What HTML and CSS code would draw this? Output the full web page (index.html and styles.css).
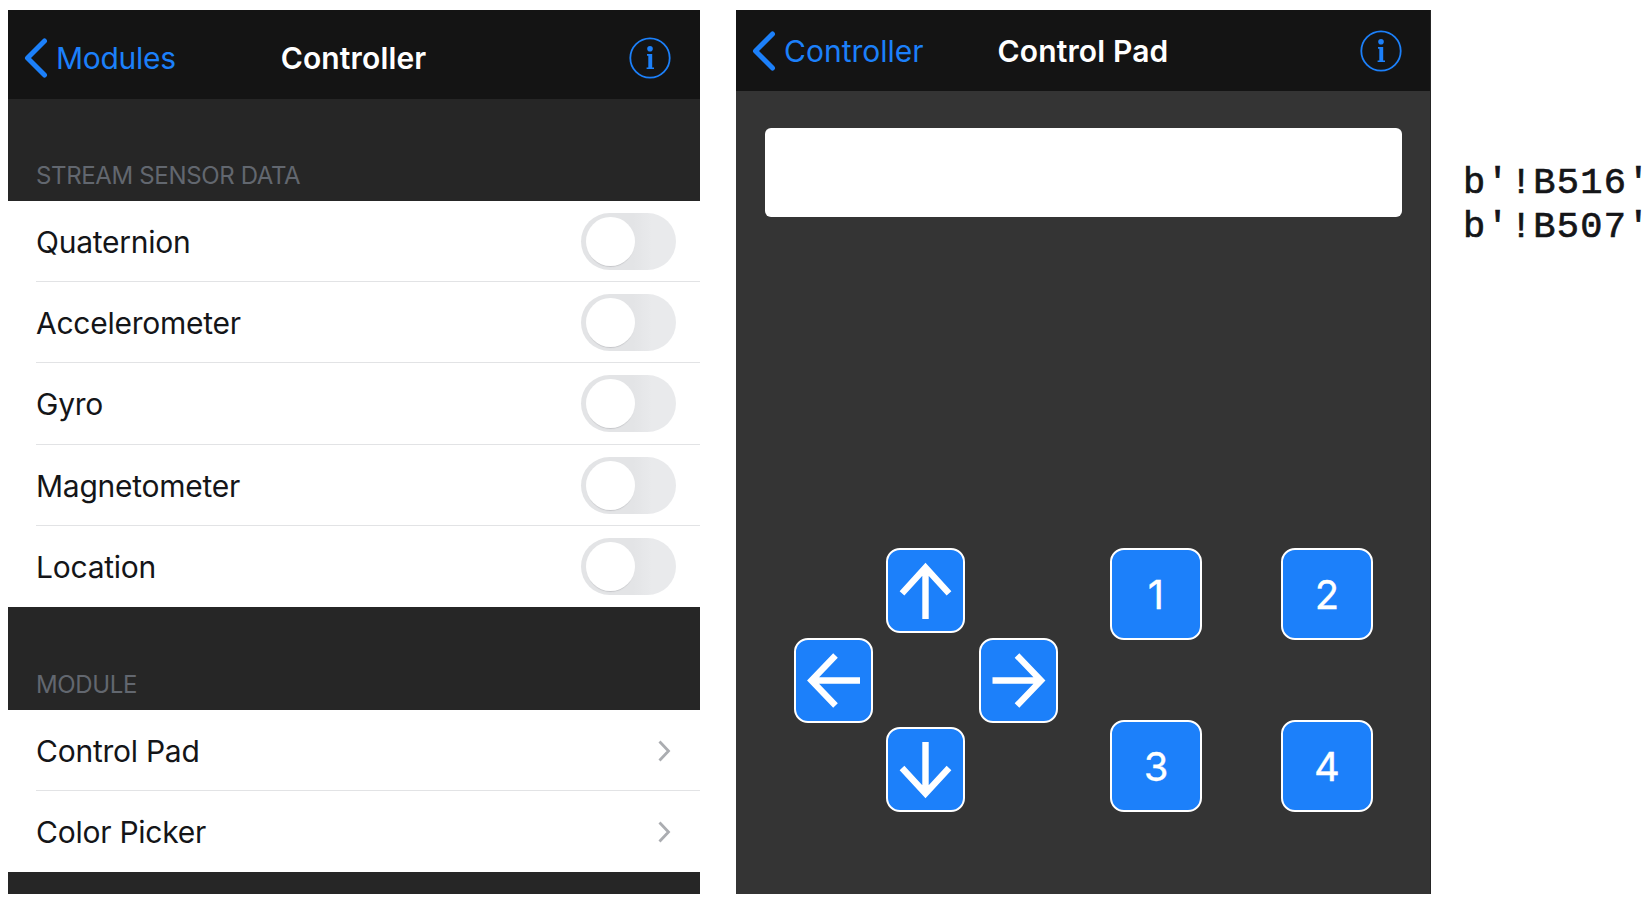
FILE: index.html
```
<!DOCTYPE html>
<html lang="en">
<head>
<meta charset="utf-8">
<title>Controller</title>
<link rel="stylesheet" href="styles.css">
</head>
<body>
<main class="stage">
  <section class="screen modules">
    <header class="navbar">
      <a class="back"><svg class="back-icon" viewBox="0 0 24 40"><path d="M20.5 3 3.5 20l17 17"/></svg><span>Modules</span></a>
      <h1>Controller</h1>
      <svg class="info" viewBox="0 0 42 42"><circle class="ring" cx="21" cy="21" r="19.7"/><circle cx="21" cy="11.7" r="2.8"/><path d="M18 17h5.2v13.5H25v1.6h-7.4v-1.6h1.7V18.7H18z"/></svg>
    </header>
    <h2 class="group-title first">STREAM SENSOR DATA</h2>
    <ul class="list sensors">
      <li><span>Quaternion</span><i class="toggle"></i></li>
      <li><span>Accelerometer</span><i class="toggle"></i></li>
      <li><span>Gyro</span><i class="toggle"></i></li>
      <li><span>Magnetometer</span><i class="toggle"></i></li>
      <li><span>Location</span><i class="toggle"></i></li>
    </ul>
    <h2 class="group-title second">MODULE</h2>
    <ul class="list links">
      <li><span>Control Pad</span><svg class="more" viewBox="0 0 14 24"><path d="M2.5 2.5 11.5 12l-9 9.5"/></svg></li>
      <li><span>Color Picker</span><svg class="more" viewBox="0 0 14 24"><path d="M2.5 2.5 11.5 12l-9 9.5"/></svg></li>
    </ul>
  </section>

  <section class="screen pad">
    <header class="navbar">
      <a class="back"><svg class="back-icon" viewBox="0 0 24 40"><path d="M20.5 3 3.5 20l17 17"/></svg><span>Controller</span></a>
      <h1>Control Pad</h1>
      <svg class="info" viewBox="0 0 42 42"><circle class="ring" cx="21" cy="21" r="19.7"/><circle cx="21" cy="11.7" r="2.8"/><path d="M18 17h5.2v13.5H25v1.6h-7.4v-1.6h1.7V18.7H18z"/></svg>
    </header>
    <div class="field"></div>
    <div class="keys">
      <div class="arrows">
        <button class="key up"><svg viewBox="0 0 79 85"><path d="M16 45.3 39.5 19.5 63 45.3M39.5 20v51"/></svg></button>
        <button class="key left"><svg viewBox="0 0 79 85"><path d="M41.5 17.5 17.5 42.5l24 25M18 42.5h48"/></svg></button>
        <button class="key right"><svg viewBox="0 0 79 85"><path d="M38 17.5l24 25-24 25M61.5 42.5h-48"/></svg></button>
        <button class="key down"><svg viewBox="0 0 79 85"><path d="M16 41 39.5 66.5 63 41M39.5 66V15"/></svg></button>
      </div>
      <div class="numbers">
        <button class="key">1</button>
        <button class="key">2</button>
        <button class="key">3</button>
        <button class="key">4</button>
      </div>
    </div>
  </section>

  <pre class="output">b'!B516'
b'!B507'</pre>
</main>
</body>
</html>
```
FILE: styles.css
```
* { box-sizing: border-box; }
body {
  margin: 0;
  width: 1649px;
  height: 903px;
  overflow: hidden;
  background: #fff;
  font-family: Inter, "Liberation Sans", sans-serif;
}
h1, h2, ul, pre { margin: 0; padding: 0; }
ul { list-style: none; }
svg { display: block; flex: none; }

.stage { display: flex; align-items: flex-start; padding: 10px 0 0 8px; }
.screen { flex: none; height: 884px; display: flex; flex-direction: column; }
.modules { width: 692px; background: #262626; }
.pad { width: 695px; margin-left: 36px; background: #343434; border-right: 1px solid #262626; }

.navbar {
  flex: none;
  display: grid;
  grid-template-columns: 1fr auto 1fr;
  align-items: center;
  background: #141414;
  font-size: 30px;
  line-height: 36px;
  white-space: nowrap;
}
.modules .navbar { height: 89px; padding: 7px 29px 0 16px; }
.pad .navbar { height: 81px; padding: 0 28px 0 16px; }
.navbar h1 { margin: 0 -6px 0 6px; font-size: 30px; font-weight: 600; letter-spacing: 0.15px; color: #fff; }
.back { display: flex; align-items: center; gap: 8px; color: #1c80fa; }
.modules .back span { letter-spacing: -0.3px; }
.back-icon { width: 24px; height: 40px; fill: none; stroke: #1c80fa; stroke-width: 5; stroke-linecap: round; stroke-linejoin: round; }
.info { width: 42px; height: 42px; justify-self: end; fill: #1c80fa; }
.ring { fill: none; stroke: #1c80fa; stroke-width: 1.8; }

.group-title {
  flex: none;
  display: flex;
  align-items: flex-end;
  padding-left: 28px;
  font-size: 24px;
  line-height: 29px;
  font-weight: 400;
  letter-spacing: -0.35px;
  color: #62676f;
}
.first { height: 101px; padding-bottom: 11px; margin-top: 1px; }
.second { height: 103px; padding-bottom: 11px; }

.list { flex: none; background: #fff; color: #141518; font-size: 30px; line-height: 36px; letter-spacing: -0.25px; }
.sensors { height: 406px; }
.links { height: 162px; }
.list li {
  display: flex;
  align-items: center;
  justify-content: space-between;
  margin-left: 28px;
  padding-top: 1px;
  border-bottom: 1px solid #e2e3e5;
}
.list li span { padding-top: 1px; }
.sensors li { height: 81.2px; padding-right: 24px; }
.links li { height: 81px; padding-right: 29px; }
.list li:last-child { border-bottom-color: transparent; }

.toggle {
  width: 95px;
  height: 57px;
  padding: 4px 5px;
  border-radius: 29px;
  background: linear-gradient(90deg, #e3e4e6 55%, #e9eaec 75%);
}
.toggle::before {
  content: "";
  display: block;
  width: 49px;
  height: 49px;
  border-radius: 50%;
  background: #fff;
  box-shadow: 0 2px 1px -1px #c4c5c8;
}
.more { width: 14px; height: 24px; fill: none; stroke: #abadb1; stroke-width: 2.8; }

.field { flex: none; height: 89px; margin: 37px 28px 0 29px; border-radius: 6px; background: #fff; }
.keys { display: flex; align-items: flex-start; margin: 331px 0 0 58px; }
.arrows {
  display: grid;
  grid-template-columns: repeat(3, 79px);
  grid-template-rows: repeat(3, 85px);
  gap: 4.5px 13.3px;
  grid-template-areas: ". up ." "left . right" ". down .";
}
.up { grid-area: up; }
.left { grid-area: left; }
.right { grid-area: right; }
.down { grid-area: down; }
.numbers {
  display: grid;
  grid-template-columns: repeat(2, 92px);
  grid-template-rows: repeat(2, 92px);
  gap: 80px 79px;
  margin-left: 52.4px;
}
.key {
  display: flex;
  align-items: center;
  justify-content: center;
  padding: 0;
  border: 2px solid #fff;
  border-radius: 14px;
  background: #1c80fa;
  color: #fff;
  font: 400 40px/48px Inter, sans-serif;
  -webkit-text-stroke: 0.3px #fff;
}
.numbers .key { padding-top: 2px; }
.key svg { width: 79px; height: 85px; margin: -2px; fill: none; stroke: #fff; stroke-width: 6.4; stroke-miterlimit: 10; }

.output {
  flex: none;
  margin: 152px 0 0 32px;
  font-family: "Liberation Mono", monospace;
  font-size: 37px;
  line-height: 43.5px;
  letter-spacing: 1.25px;
  color: #141518;
  -webkit-text-stroke: 0.7px #141518;
}
```
